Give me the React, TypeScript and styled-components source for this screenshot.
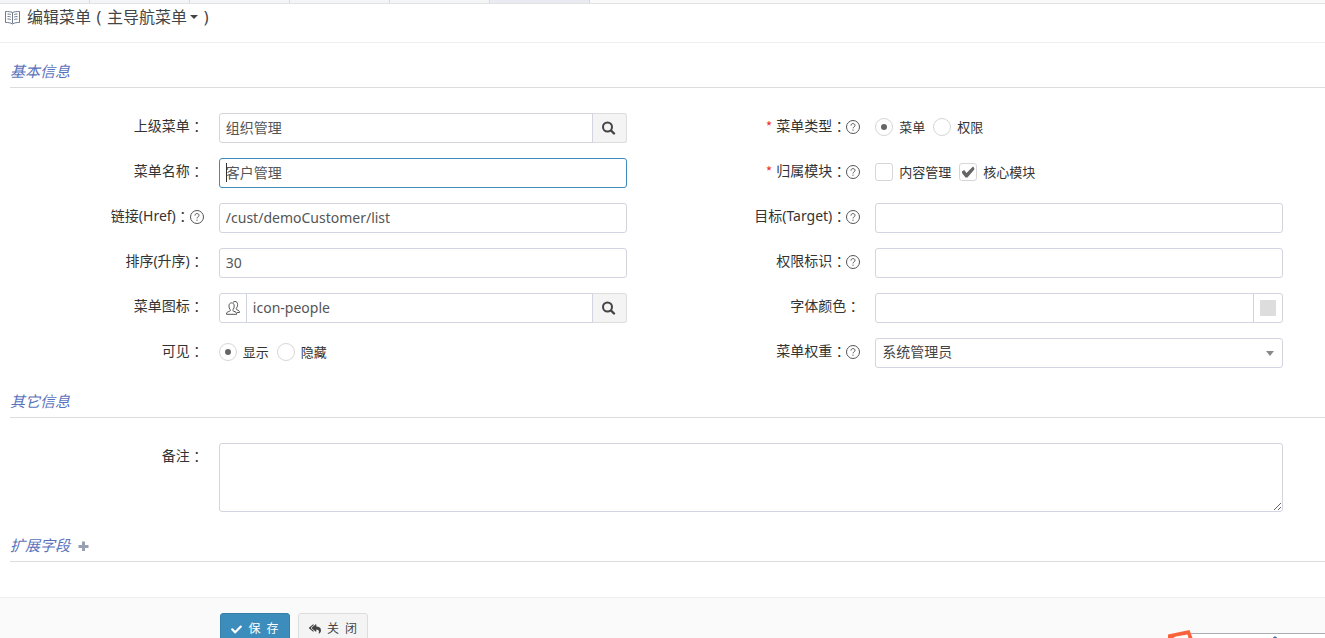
import React, { useState } from "react";
import styled, { createGlobalStyle, css } from "styled-components";
import { FaCheck, FaReplyAll } from "react-icons/fa";

const GlobalStyle = createGlobalStyle`
  *, *::before, *::after { box-sizing: border-box; }
  body {
    margin: 0;
    background: #fff;
    color: #333;
    font: 14px/20px "Noto Sans", "Noto Sans CJK SC", sans-serif;
  }
  button, input, select, textarea { font: inherit; color: inherit; }
`;

const borderColor = "#d2d4e0";
const accent = "#3c8dbc";

const Shell = styled.div`
  position: relative;
  display: flex;
  flex-direction: column;
  height: 100vh;
  overflow: hidden;
`;

const TabStrip = styled.div`
  display: flex;
  flex: none;
  height: 4px;
  background: #f9f9f9;
  border-bottom: 1px solid #e2e2e2;
`;

const TabEdge = styled.div<{ $active?: boolean; $first?: boolean }>`
  width: ${(p) => (p.$first ? 90 : 100)}px;
  background: ${(p) => (p.$active ? "#e8ecf2" : "#f4f5f7")};
  border-right: 1px solid #d9dadc;
`;

const Header = styled.header`
  display: flex;
  align-items: flex-start;
  flex: none;
  height: 39px;
  padding: 3px 5px;
  border-bottom: 1px solid #eee;
  color: #444;
`;

const Title = styled.h1`
  display: flex;
  align-items: center;
  margin: 0 0 0 7px;
  font-size: 16px;
  font-weight: 400;
  line-height: 20px;
`;

const TitleMenu = styled.button`
  display: flex;
  align-items: center;
  gap: 3px;
  padding: 0;
  border: 0;
  background: none;
  cursor: pointer;
`;

const Caret = styled.span`
  border: 4px solid transparent;
  border-top-color: currentColor;
  border-bottom: 0;
`;

const Paren = styled.span`
  width: 16px;
  text-align: center;
`;

const Centered = styled.span`
  font-family: "Noto Sans CJK TC", "Noto Sans CJK SC", sans-serif;
`;

const BookIcon = styled.svg`
  width: 15px;
  height: 14px;
  margin-top: 4px;
  flex: none;
`;

const Form = styled.form`
  flex: none;
  padding-top: 18px;
`;

const SectionTitle = styled.h2`
  display: flex;
  align-items: center;
  gap: 8px;
  margin: 0 0 25px 10px;
  padding-bottom: 6px;
  border-bottom: 1px solid #ddd;
  color: #5a72bb;
  font-size: 15px;
  font-style: italic;
  font-weight: 400;
  line-height: 20px;
`;

const ExpandButton = styled.button`
  display: flex;
  padding: 0;
  border: 0;
  background: none;
  color: #97a0b3;
  cursor: pointer;
`;

const Fields = styled.div`
  display: grid;
  grid-template-columns: 1fr 1fr;
  row-gap: 15px;
  margin: 0 27px 23px -15px;
`;

const Field = styled.div<{ $wide?: boolean }>`
  display: grid;
  grid-template-columns: ${(p) => (p.$wide ? "1fr 5fr" : "1fr 2fr")};
  ${(p) => p.$wide && css`grid-column: 1 / -1;`}
`;

const FieldLabel = styled.label`
  display: flex;
  align-items: center;
  justify-content: flex-end;
  height: 20px;
  margin-top: 3px;
  white-space: nowrap;
`;

const Required = styled.span`
  margin-right: 4px;
  color: #e33;
  font-family: "Noto Sans CJK SC", sans-serif;
`;

const HelpSvg = styled.svg`
  width: 14px;
  height: 14px;
  margin-top: 2px;
  flex: none;
`;

const Control = styled.div`
  display: flex;
  position: relative;
  min-width: 0;
  min-height: 30px;
  padding: 0 15px;
`;

const boxed = css`
  min-width: 0;
  border: 1px solid ${borderColor};
  border-radius: 3px;
  background: #fff;
  color: #555;
  outline: none;
`;

const TextInput = styled.input<{ $before?: boolean; $after?: boolean }>`
  ${boxed}
  flex: 1;
  height: 30px;
  padding: 0 6px 2px;
  ${(p) => p.$before && css`border-top-left-radius: 0; border-bottom-left-radius: 0;`}
  ${(p) => p.$after && css`border-top-right-radius: 0; border-bottom-right-radius: 0;`}
  &:focus { border-color: ${accent}; caret-color: transparent; }
`;

const TextCursor = styled.span`
  position: absolute;
  left: 22px;
  top: 5px;
  width: 1px;
  height: 19px;
  background: #333;
`;

const Select = styled.select`
  ${boxed}
  flex: 1;
  height: 30px;
  padding: 0 24px 2px 6px;
  appearance: none;
  color: #444;
`;

const SelectArrow = styled.span`
  position: absolute;
  right: 24px;
  top: 13px;
  border: 4px solid transparent;
  border-top: 5px solid #888;
  border-bottom: 0;
  pointer-events: none;
`;

const TextArea = styled.textarea`
  ${boxed}
  flex: 1;
  height: 69px;
  padding: 6px;
  resize: vertical;
`;

const LeadIcon = styled.span`
  ${boxed}
  display: flex;
  align-items: center;
  justify-content: center;
  width: 28px;
  height: 30px;
  margin-right: -1px;
  border-radius: 3px 0 0 3px;
`;

const SearchButton = styled.button`
  display: flex;
  align-items: center;
  justify-content: center;
  width: 35px;
  height: 30px;
  margin-left: -1px;
  padding: 0;
  border: 1px solid #ddd;
  border-left-color: ${borderColor};
  border-radius: 0 3px 3px 0;
  background: #f4f4f4;
  color: #444;
  cursor: pointer;
`;

const SwatchButton = styled.button`
  ${boxed}
  display: flex;
  align-items: center;
  justify-content: center;
  width: 30px;
  height: 30px;
  margin-left: -1px;
  padding: 0;
  border-radius: 0 3px 3px 0;
  &::before {
    content: "";
    width: 16px;
    height: 16px;
    background: #ddd;
  }
`;

const Choices = styled.div`
  display: flex;
  align-items: center;
  gap: 8px;
  height: 28px;
`;

const Choice = styled.label`
  display: flex;
  align-items: center;
  gap: 6px;
  font-size: 13px;
  line-height: 18px;
  white-space: nowrap;
`;

const Tick = styled.input`
  appearance: none;
  display: grid;
  place-items: center;
  width: 18px;
  height: 18px;
  margin: 0;
  border: 1px solid #d6d6d6;
  border-radius: 3px;
  background: #fff;
  &[type="radio"] { border-radius: 50%; }
  &[type="radio"]:checked::before {
    content: "";
    width: 6px;
    height: 6px;
    border-radius: 50%;
    background: #666;
  }
`;

const TickBox = styled.span`
  display: grid;
  > * { grid-area: 1 / 1; }
  svg { pointer-events: none; place-self: center; }
`;

const Footer = styled.footer`
  display: flex;
  flex: 1 0 60px;
  align-items: flex-start;
  gap: 8px;
  margin-top: 10px;
  padding: 15px 0 15px 220px;
  border-top: 1px solid #eee;
  background: #fafafa;
`;

const ActionButton = styled.button<{ $primary?: boolean }>`
  display: flex;
  align-items: center;
  justify-content: center;
  gap: 6px;
  width: 70px;
  height: 32px;
  padding: 0;
  border: 1px solid ${(p) => (p.$primary ? "#367fa9" : "#ddd")};
  border-radius: 3px;
  background: ${(p) => (p.$primary ? accent : "#f4f4f4")};
  color: ${(p) => (p.$primary ? "#fff" : "#444")};
  font-size: 12px;
  white-space: pre;
  cursor: pointer;
`;

const ImeBar = styled.div`
  position: absolute;
  right: 0;
  bottom: 0;
  width: 158px;
  height: 9px;
  svg { display: block; }
`;

const Colon = () => <Centered>：</Centered>;

const Help = () => (
  <HelpSvg viewBox="0 0 14 14" fill="none" stroke="#555" aria-hidden="true">
    <circle cx="7" cy="7" r="6.5" />
    <path d="M5 5.6C5 4.300 5.800 3.600 7 3.600s2 .7 2 1.800c0 1.500-2 1.500-2 3" />
    <path d="M7 9.600v1.200" />
  </HelpSvg>
);

const SearchIcon = () => (
  <svg width="14" height="14" viewBox="0 0 14 14" fill="none" stroke="currentColor" aria-hidden="true">
    <circle cx="5.500" cy="6" r="4.500" strokeWidth="2" />
    <path d="M9 9.500l3 3" strokeWidth="2.400" strokeLinecap="round" />
  </svg>
);

const PlusIcon = () => (
  <svg width="11" height="11" viewBox="0 0 11 11" fill="none" stroke="currentColor" strokeWidth="3" aria-hidden="true">
    <path d="M.5 6.500h10M5.500 1.500v10" />
  </svg>
);

const PeopleIcon = () => (
  <svg width="14" height="14" viewBox="0 0 14 14" fill="none" stroke="#555" aria-hidden="true">
    <path d="M.5 13.300c0-2 .8-2.400 3.200-3.100.9-.3.8-1.300.3-1.800C3.300 7.500 3 6.400 3 4.900 3 3 4 1.900 5.600 1.900S8.200 3 8.200 4.900c0 1.500-.3 2.600-1 3.500-.5.500-.6 1.500.3 1.800 2.400.7 3.200 1.100 3.200 3.100z" />
    <path d="M7 1.400C7.500.8 8.200.5 9 .5c1.600 0 2.600 1.100 2.600 3 0 1.500-.3 2.600-1 3.500-.5.500-.6 1.500.3 1.800 2 .6 2.600 1.200 2.600 2.700h-2.400" />
  </svg>
);

type RowProps = {
  id: string;
  label: string;
  help?: boolean;
  required?: boolean;
  wide?: boolean;
  children: React.ReactNode;
};

const Row = ({ id, label, help, required, wide, children }: RowProps) => (
  <Field $wide={wide}>
    <FieldLabel htmlFor={id}>
      {required && <Required>*</Required>}
      {label}
      <Colon />
      {help && <Help />}
    </FieldLabel>
    <Control>{children}</Control>
  </Field>
);

type OptionProps = { id?: string; type: "radio" | "checkbox"; name: string; text: string; checked?: boolean };

const Option = ({ id, type, name, text, checked }: OptionProps) => {
  const [on, setOn] = useState(!!checked);
  return (
    <Choice>
      <TickBox>
        {type === "radio" ? (
          <Tick id={id} type="radio" name={name} defaultChecked={checked} />
        ) : (
          <Tick id={id} type="checkbox" name={name} checked={on} onChange={(e) => setOn(e.target.checked)} />
        )}
        {type === "checkbox" && on && (
          <svg width="14" height="14" viewBox="0 0 14 14" fill="#666" aria-hidden="true">
            <path d="M1 6.500L3.200 5l2.300 3L12 1.500 13.300 3v1.500L6.500 12.500h-2L1 8z" />
          </svg>
        )}
      </TickBox>
      {text}
    </Choice>
  );
};

export default function App() {
  return (
    <>
      <GlobalStyle />
      <Shell>
        <TabStrip>
          <TabEdge $first />
          <TabEdge />
          <TabEdge />
          <TabEdge />
          <TabEdge />
          <TabEdge $active />
        </TabStrip>
        <Header>
          <BookIcon viewBox="0 0 15 14" fill="none" stroke="#6d7b8c" aria-hidden="true">
            <path d="M7.500 1.500C5.500.6 3 .5.500.5v11c2.500 0 5 .1 7 1.500 2-1.400 4.500-1.500 7-1.500V.5c-2.500 0-5 .1-7 1zM7.500 1.500v11" />
            <path d="M2.500 3c1.200 0 2.300.1 3.300.5M2.500 5.500c1.200 0 2.300.1 3.300.5M2.500 8c1.200 0 2.300.1 3.300.5M12.500 3c-1.200 0-2.300.1-3.300.5M12.500 5.500c-1.200 0-2.300.1-3.300.5M12.500 8c-1.200 0-2.300.1-3.300.5" />
          </BookIcon>
          <Title>
            编辑菜单
            <Paren>(</Paren>
            <TitleMenu type="button">
              主导航菜单
              <Caret />
            </TitleMenu>
            <Paren>)</Paren>
          </Title>
        </Header>

        <Form onSubmit={(e) => e.preventDefault()}>
          <SectionTitle>基本信息</SectionTitle>
          <Fields>
            <Row id="parent" label="上级菜单">
              <TextInput id="parent" $after defaultValue="组织管理" />
              <SearchButton type="button" aria-label="选择上级菜单"><SearchIcon /></SearchButton>
            </Row>
            <Row id="type" label="菜单类型" required help>
              <Choices>
                <Option id="type" type="radio" name="type" text="菜单" checked />
                <Option type="radio" name="type" text="权限" />
              </Choices>
            </Row>
            <Row id="name" label="菜单名称">
              <TextInput id="name" autoFocus defaultValue="客户管理" />
              <TextCursor />
            </Row>
            <Row id="module" label="归属模块" required help>
              <Choices>
                <Option id="module" type="checkbox" name="module" text="内容管理" />
                <Option type="checkbox" name="module" text="核心模块" checked />
              </Choices>
            </Row>
            <Row id="href" label="链接(Href)" help>
              <TextInput id="href" defaultValue="/cust/demoCustomer/list" />
            </Row>
            <Row id="target" label="目标(Target)" help>
              <TextInput id="target" />
            </Row>
            <Row id="sort" label="排序(升序)">
              <TextInput id="sort" defaultValue="30" />
            </Row>
            <Row id="permission" label="权限标识" help>
              <TextInput id="permission" />
            </Row>
            <Row id="icon" label="菜单图标">
              <LeadIcon><PeopleIcon /></LeadIcon>
              <TextInput id="icon" $before $after defaultValue="icon-people" />
              <SearchButton type="button" aria-label="选择图标"><SearchIcon /></SearchButton>
            </Row>
            <Row id="color" label="字体颜色">
              <TextInput id="color" $after />
              <SwatchButton type="button" aria-label="选择颜色" />
            </Row>
            <Row id="visible" label="可见">
              <Choices>
                <Option id="visible" type="radio" name="visible" text="显示" checked />
                <Option type="radio" name="visible" text="隐藏" />
              </Choices>
            </Row>
            <Row id="weight" label="菜单权重" help>
              <Select id="weight">
                <option>系统管理员</option>
              </Select>
              <SelectArrow />
            </Row>
          </Fields>

          <SectionTitle>其它信息</SectionTitle>
          <Fields>
            <Row id="remarks" label="备注" wide>
              <TextArea id="remarks" />
            </Row>
          </Fields>

          <SectionTitle>
            扩展字段
            <ExpandButton type="button" aria-label="展开扩展字段"><PlusIcon /></ExpandButton>
          </SectionTitle>
        </Form>

        <Footer>
          <ActionButton type="button" $primary><FaCheck size={11} />{"保\u00a0\u00a0存"}</ActionButton>
          <ActionButton type="button"><FaReplyAll size={12} />{"关\u00a0\u00a0闭"}</ActionButton>
        </Footer>

        <ImeBar>
          <svg width="158" height="9" viewBox="0 0 158 9" aria-hidden="true">
            <path d="M24 4.500H158V9H24z" fill="#fff" />
            <path d="M24 4.500H158" stroke="#aaacb4" />
            <path d="M1 9V5.500L22.500 1 25.500 9z" fill="#f9633b" />
            <path d="M6 9L9 7.500 20.500 5.500 21.500 9z" fill="#fff" />
            <path d="M106 9c.5-2 3.500-2 4 0z" fill="#3f6fa8" />
          </svg>
        </ImeBar>
      </Shell>
    </>
  );
}
